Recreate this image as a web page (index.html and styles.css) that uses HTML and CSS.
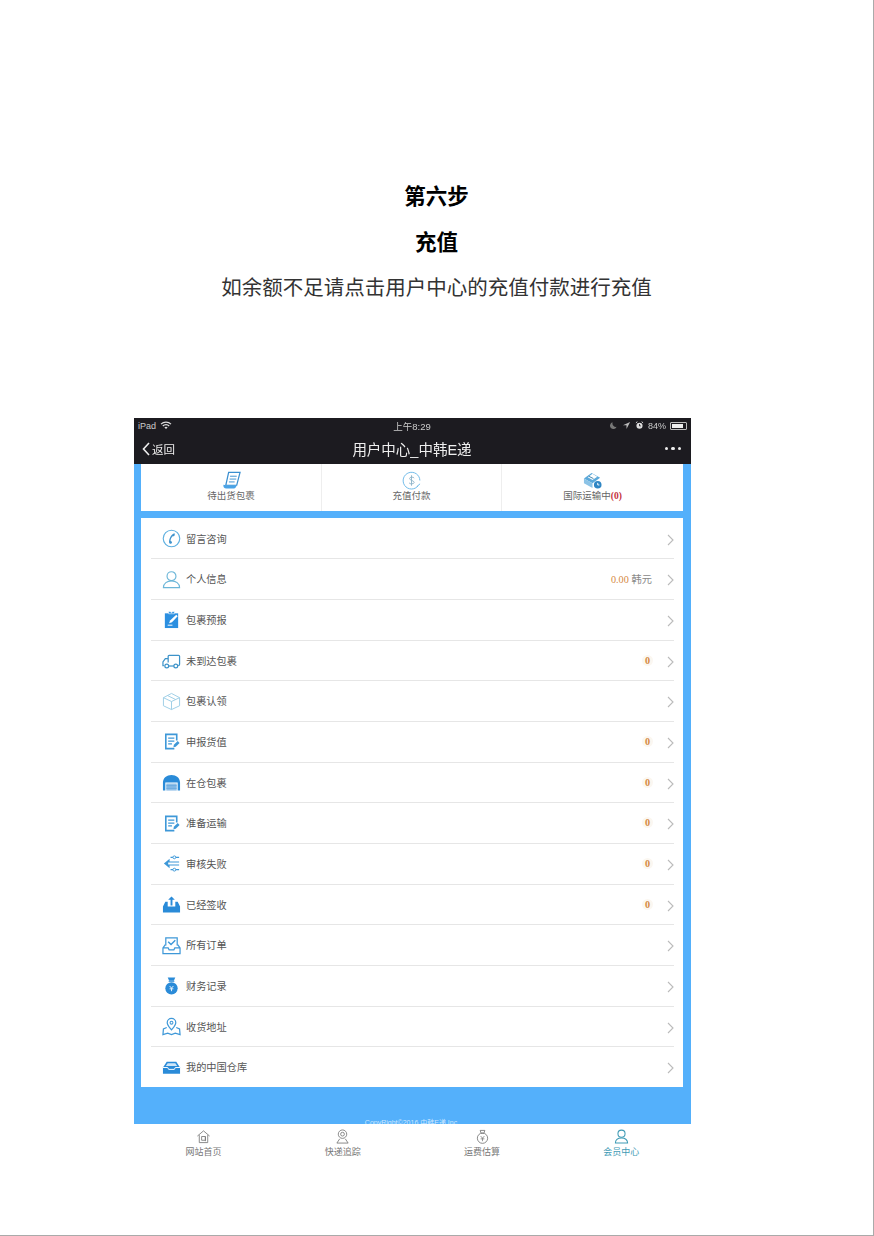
FILE: index.html
```html
<!DOCTYPE html>
<html lang="zh-CN">

<head>
    <meta charset="UTF-8">
    <title>第六步 充值</title>
    <link rel="stylesheet" href="styles.css">
</head>

<body>
    <div class="page">
        <h2 class="step">第六步</h2>
        <h2 class="step">充值</h2>
        <p class="desc">如余额不足请点击用户中心的充值付款进行充值</p>

        <div class="phone">
            <!-- barra de estado -->
            <div class="statusbar">
                <div class="status-left">
                    <span>iPad</span>
                    <svg class="st-wifi" viewBox="0 0 12 9"><path d="M1 3.2a7 7 0 0 1 10 0M2.8 5a4.4 4.4 0 0 1 6.4 0" fill="none" stroke="#ddd" stroke-width="1.2"/><path d="M4.4 6.4a2.3 2.3 0 0 1 3.2 0L6 8z" fill="#ddd"/></svg>
                </div>
                <span class="status-time">上午8:29</span>
                <div class="status-right">
                    <svg class="st-icon" viewBox="0 0 10 10"><path d="M4 1.500a3.800 3.800 0 1 0 4.500 5A4 4 0 0 1 4 1.500z" fill="#777"/></svg>
                    <svg class="st-icon" viewBox="0 0 10 10"><path d="M9 1 1 4.600h4V9z" fill="#bbb"/></svg>
                    <svg class="st-icon" viewBox="0 0 10 10"><circle cx="5" cy="5.300" r="3.400" fill="#ddd"/><path d="M5 3.400v2h1.400" stroke="#1c1b20" fill="none"/><path d="M1 2 2.600.8M9 2 7.400.8" stroke="#ddd" stroke-width="1.100"/></svg>
                    <span>84%</span>
                    <span class="battery"><span class="battery-fill"></span></span>
                </div>
            </div>

            <!-- barra de navegacion -->
            <div class="navbar">
                <div class="nav-back">
                    <svg class="back-arrow" viewBox="0 0 8 14"><path d="M7 1 1.500 7 7 13" fill="none" stroke="#eee" stroke-width="1.600"/></svg>
                    <span>返回</span>
                </div>
                <span class="nav-title">用户中心_中韩E递</span>
                <div class="nav-dots"><i></i><i></i><i></i></div>
            </div>

            <div class="content">
                <div class="shortcuts">
                    <div class="shortcut">
                        <svg class="sc-icon" viewBox="0 0 20 20"><path d="M7 1.500h12l-3.500 13.500H4z" fill="#fff" stroke="#3a8fd0" stroke-width="1.300"/><path d="M8.500 5.500h7M8 8.500h7M7.300 11.500h6" stroke="#3a8fd0"/><path d="M1.500 14.500c-.5 2.500 1 4 3 4h8c1.500 0 2.500-1.500 3-3.500h-11z" fill="#4aa3e6"/></svg>
                        <span>待出货包裹</span>
                    </div>
                    <div class="shortcut">
                        <svg class="sc-icon" viewBox="0 0 20 20"><path d="M17 15.500A8.800 8.800 0 1 1 18.800 10" fill="none" stroke="#6cb8e8"/><path d="M15.500 16.500 19 13.500" stroke="#6cb8e8"/><path d="M12.800 7.500C12.200 6 8 6 8 8s4.800 2 4.800 4-4.800 2-5.300.5M10 4.500v11" fill="none" stroke="#8fb4c9"/></svg>
                        <span>充值付款</span>
                    </div>
                    <div class="shortcut">
                        <svg class="sc-icon" viewBox="0 0 20 20"><path d="m1 8 8-6 9 5-8 6z" fill="#5ba9da"/><path d="m1 8 9 5v5L1 13z" fill="#8cc3e6"/><path d="m5 6.500 5-3.500 5 3-5 3.500z" fill="#fff"/><path d="M6 5.500 11 8" stroke="#3d7ea8"/><circle cx="15.500" cy="14.500" r="4" fill="#2f86c4"/><path d="M15.500 12.500v2.200h1.800" stroke="#fff" fill="none"/></svg>
                        <span>国际运输中<b class="count">(0)</b></span>
                    </div>
                </div>

                <div class="menu">
                    <div class="row">
                        <svg class="row-icon" viewBox="0 0 20 20"><circle cx="10" cy="10" r="8.700" fill="none" stroke="#5fb0e0" stroke-width="1.200"/><path d="M13 4.500c-3 .5-6 6-5.500 10 .3 1.500 2.500 1.200 3 0 .2-1-.5-2-1.500-2 0-2 1-4 2.200-5 1 .3 2-.3 2.200-1.300.1-1-.2-1.700-.4-1.700z" fill="#3f93cc"/></svg>
                        <span class="row-text">留言咨询</span>
                        <svg class="chev" viewBox="0 0 7 12"><path d="m1 1 5 5-5 5" fill="none" stroke="#bbb" stroke-width="1.100"/></svg>
                    </div>
                    <div class="row">
                        <svg class="row-icon" viewBox="0 0 20 20"><circle cx="10" cy="6.500" r="4.700" fill="none" stroke="#6cb6d8" stroke-width="1.200"/><path d="M1.500 18.500c0-4.500 4-7 8.500-7s8.500 2.500 8.500 7z" fill="none" stroke="#6cb6d8" stroke-width="1.200"/></svg>
                        <span class="row-text">个人信息</span>
                        <span class="row-value"><em class="num">0.00</em> 韩元</span>
                        <svg class="chev" viewBox="0 0 7 12"><path d="m1 1 5 5-5 5" fill="none" stroke="#bbb" stroke-width="1.100"/></svg>
                    </div>
                    <div class="row">
                        <svg class="row-icon" viewBox="0 0 20 20"><path d="M3 3.500h14V19H3z" fill="#2b8fe0"/><path d="M7 4V1.500h1.500L10 3l1.500-1.500H13V4z" fill="#2b8fe0" stroke="#fff" stroke-width=".6"/><path d="m7.500 14 1-3L15 5l1.500 1.500L10.500 13z" fill="#fff"/><path d="M6 16h5" stroke="#fff"/></svg>
                        <span class="row-text">包裹预报</span>
                        <svg class="chev" viewBox="0 0 7 12"><path d="m1 1 5 5-5 5" fill="none" stroke="#bbb" stroke-width="1.100"/></svg>
                    </div>
                    <div class="row">
                        <svg class="row-icon" viewBox="0 0 20 20"><path d="M6.500 12V5.500c0-.6.400-1 1-1h10c.6 0 1 .4 1 1v8.500c0 .8-.6 1.500-1.500 1.500M6 8H3.500L1 11.500v4h1" fill="none" stroke="#3d93c9" stroke-width="1.300"/><circle cx="5" cy="15.800" r="2" fill="none" stroke="#3d93c9" stroke-width="1.300"/><circle cx="14.500" cy="15.800" r="2" fill="none" stroke="#3d93c9" stroke-width="1.300"/><path d="M7 15.800h5.500" stroke="#3d93c9" stroke-width="1.300"/></svg>
                        <span class="row-text">未到达包裹</span>
                        <span class="row-value"><em class="num badge">0</em></span>
                        <svg class="chev" viewBox="0 0 7 12"><path d="m1 1 5 5-5 5" fill="none" stroke="#bbb" stroke-width="1.100"/></svg>
                    </div>
                    <div class="row">
                        <svg class="row-icon" viewBox="0 0 20 20"><path d="M10 1.500 18.500 6v8.500L10 18.500 1.500 14.500V6zM1.500 6 10 10l8.500-4M10 10v8.500M6 3.800l8.500 4.200" fill="none" stroke="#9ccde6" stroke-width="1"/></svg>
                        <span class="row-text">包裹认领</span>
                        <svg class="chev" viewBox="0 0 7 12"><path d="m1 1 5 5-5 5" fill="none" stroke="#bbb" stroke-width="1.100"/></svg>
                    </div>
                    <div class="row">
                        <svg class="row-icon" viewBox="0 0 20 20"><path d="M15.500 9V2.500H4v15h9" fill="none" stroke="#3e98d8" stroke-width="1.700"/><path d="M6.500 6.500h6.500M6.500 9.500h6.500M6.500 12.500h4" stroke="#3e98d8" stroke-width="1.300"/><path d="m12 16 .5-2.500 4-4 2 2-4 4z" fill="#3e98d8"/></svg>
                        <span class="row-text">申报货值</span>
                        <span class="row-value"><em class="num badge">0</em></span>
                        <svg class="chev" viewBox="0 0 7 12"><path d="m1 1 5 5-5 5" fill="none" stroke="#bbb" stroke-width="1.100"/></svg>
                    </div>
                    <div class="row">
                        <svg class="row-icon" viewBox="0 0 20 20"><path d="M1 18.500V10C1 5 5 2 10 2s9 3 9 8v8.500h-2.500V10h-13v8.500z" fill="#2a8bd8"/><path d="M4.500 11h11v7.500h-11z" fill="#8fbfe8"/><path d="M4.500 13.500h11M4.500 16h11" stroke="#5fa3dc"/></svg>
                        <span class="row-text">在仓包裹</span>
                        <span class="row-value"><em class="num badge">0</em></span>
                        <svg class="chev" viewBox="0 0 7 12"><path d="m1 1 5 5-5 5" fill="none" stroke="#bbb" stroke-width="1.100"/></svg>
                    </div>
                    <div class="row">
                        <svg class="row-icon" viewBox="0 0 20 20"><path d="M15.500 9V2.500H4v15h9" fill="none" stroke="#3e98d8" stroke-width="1.700"/><path d="M6.500 6.500h6.500M6.500 9.500h6.500M6.500 12.500h4" stroke="#3e98d8" stroke-width="1.300"/><path d="m12 16 .5-2.500 4-4 2 2-4 4z" fill="#3e98d8"/></svg>
                        <span class="row-text">准备运输</span>
                        <span class="row-value"><em class="num badge">0</em></span>
                        <svg class="chev" viewBox="0 0 7 12"><path d="m1 1 5 5-5 5" fill="none" stroke="#bbb" stroke-width="1.100"/></svg>
                    </div>
                    <div class="row">
                        <svg class="row-icon" viewBox="0 0 20 20"><path d="m8 5-6 5 6 5v-3h10v-1H6.500v-2H18V8H8z" fill="#3e98d8"/><path d="M9 3.500h9M9 16.500h9" stroke="#3e98d8" stroke-width="1.200"/><circle cx="13" cy="3.500" r="1.500" fill="#fff" stroke="#3e98d8"/><circle cx="13" cy="16.500" r="1.500" fill="#fff" stroke="#3e98d8"/></svg>
                        <span class="row-text">审核失败</span>
                        <span class="row-value"><em class="num badge">0</em></span>
                        <svg class="chev" viewBox="0 0 7 12"><path d="m1 1 5 5-5 5" fill="none" stroke="#bbb" stroke-width="1.100"/></svg>
                    </div>
                    <div class="row">
                        <svg class="row-icon" viewBox="0 0 20 20"><path d="M3.500 7H6v5h8V7h2.500L19 12v6.500H1V12z" fill="#2a8bd8"/><path d="M10 1.500 6.500 5H9v6h2V5h2.500z" fill="#2a8bd8"/></svg>
                        <span class="row-text">已经签收</span>
                        <span class="row-value"><em class="num badge">0</em></span>
                        <svg class="chev" viewBox="0 0 7 12"><path d="m1 1 5 5-5 5" fill="none" stroke="#bbb" stroke-width="1.100"/></svg>
                    </div>
                    <div class="row">
                        <svg class="row-icon" viewBox="0 0 20 20"><path d="M4 10V2h12v8" fill="none" stroke="#3e98d8" stroke-width="1.300"/><path d="m6.500 6 3 3 4.500-4.500" fill="none" stroke="#3e98d8" stroke-width="1.500"/><path d="M3.500 9 1 12.500V18.500h18v-6L16.500 9M1 12.500h5.500l1 2h5l1-2H19" fill="none" stroke="#3e98d8" stroke-width="1.300"/></svg>
                        <span class="row-text">所有订单</span>
                        <svg class="chev" viewBox="0 0 7 12"><path d="m1 1 5 5-5 5" fill="none" stroke="#bbb" stroke-width="1.100"/></svg>
                    </div>
                    <div class="row">
                        <svg class="row-icon" viewBox="0 0 20 20"><path d="M6 1.500h8L12.500 5h-5z" fill="#2a8bd8"/><path d="M7 5.600h6" stroke="#2a8bd8"/><circle cx="10" cy="13" r="6.500" fill="#2a8bd8"/><path d="M8 10.500l2 2.300 2-2.300M8 13.500h4M10 13v3" stroke="#fff" fill="none" stroke-width=".9"/></svg>
                        <span class="row-text">财务记录</span>
                        <svg class="chev" viewBox="0 0 7 12"><path d="m1 1 5 5-5 5" fill="none" stroke="#bbb" stroke-width="1.100"/></svg>
                    </div>
                    <div class="row">
                        <svg class="row-icon" viewBox="0 0 20 20"><path d="M10 13.500C7.500 10.500 5.500 8.500 5.500 6a4.500 4.500 0 0 1 9 0c0 2.500-2 4.500-4.500 7.500z" fill="none" stroke="#3e98d8" stroke-width="1.300"/><circle cx="10" cy="6" r="1.500" fill="none" stroke="#3e98d8" stroke-width="1.100"/><path d="M5 11 1.500 12.500 1 18.500l5-1.500 4 1.500 4-1.500 5 1.500-.5-6L15 11" fill="none" stroke="#3e98d8" stroke-width="1.300"/></svg>
                        <span class="row-text">收货地址</span>
                        <svg class="chev" viewBox="0 0 7 12"><path d="m1 1 5 5-5 5" fill="none" stroke="#bbb" stroke-width="1.100"/></svg>
                    </div>
                    <div class="row">
                        <svg class="row-icon" viewBox="0 0 20 20"><path d="M5 4h10l4 6v6.500H1V10z" fill="#2a8bd8"/><path d="M6 5.500h8l2 3H4z" fill="#cfe6f8"/><path d="M1 10h5l1 2h6l1-2h5" fill="none" stroke="#fff"/></svg>
                        <span class="row-text">我的中国仓库</span>
                        <svg class="chev" viewBox="0 0 7 12"><path d="m1 1 5 5-5 5" fill="none" stroke="#bbb" stroke-width="1.100"/></svg>
                    </div>
                </div>

                <div class="copyright">CopyRight©2016 中韩E递 Inc.</div>
            </div>

            <!-- barra inferior -->
            <div class="tabbar">
                <div class="tab">
                    <svg class="tab-icon" viewBox="0 0 16 16"><path d="M1.500 7.500 8 2l6.500 5.500M3.500 6.500V14.500h9V6.500" fill="none" stroke="#777" stroke-width=".9"/><path d="M6 8h4v4H6zM10 8v5" fill="none" stroke="#777" stroke-width=".9"/></svg>
                    <span>网站首页</span>
                </div>
                <div class="tab">
                    <svg class="tab-icon" viewBox="0 0 16 16"><circle cx="8" cy="5.500" r="4.500" fill="none" stroke="#777" stroke-width=".9"/><circle cx="8" cy="5.500" r="2" fill="none" stroke="#777" stroke-width=".9"/><path d="M5 10.500 2 15h12l-3-4.500" fill="none" stroke="#777" stroke-width=".9"/></svg>
                    <span>快递追踪</span>
                </div>
                <div class="tab">
                    <svg class="tab-icon" viewBox="0 0 16 16"><path d="M5.500 1.500h5l-1 3h-3z" fill="none" stroke="#777" stroke-width=".9"/><circle cx="8" cy="9.800" r="5.500" fill="none" stroke="#777" stroke-width=".9"/><path d="m6 7.500 2 2.300 2-2.300M6 10.500h4M8 9.800V13" fill="none" stroke="#777" stroke-width=".8"/></svg>
                    <span>运费估算</span>
                </div>
                <div class="tab tab-active">
                    <svg class="tab-icon" viewBox="0 0 16 16"><circle cx="8" cy="5" r="3.800" fill="none" stroke="#3f9bb5" stroke-width="1.100"/><path d="M1.500 15c0-3.500 2.800-5.500 6.500-5.500s6.500 2 6.500 5.500z" fill="none" stroke="#3f9bb5" stroke-width="1.100"/></svg>
                    <span>会员中心</span>
                </div>
            </div>
        </div>
    </div>
</body>

</html>
```

FILE: styles.css
```css
* {
    box-sizing: border-box;
}

body {
    margin: 0;
    background-color: #fff;
    font-family: "Liberation Sans", "Noto Sans CJK SC", sans-serif;
}

.page {
    height: 1236px;
    padding-top: 182px;
    border-right: 1px solid #aaa;
    border-bottom: 1px solid #aaa;
    overflow: hidden;
}

/* Titulos */
.step {
    margin: 0 0 17px;
    font-size: 21.5px;
    line-height: 30px;
    font-weight: bold;
    text-align: center;
    color: #000;
}

.step + .step {
    margin-top: -1px;
}

.desc {
    margin: -2px 0 0;
    font-size: 20.5px;
    line-height: 30px;
    text-align: center;
    color: #333;
}

/* Captura del telefono */
.phone {
    width: 557px;
    margin: 115px 0 0 134px;
    filter: blur(0.45px);
}

.statusbar {
    display: flex;
    align-items: center;
    justify-content: space-between;
    height: 15px;
    padding: 0 4px;
    background-color: #1c1b20;
    color: #ccc;
    font-size: 9px;
    position: relative;
}

.status-left,
.status-right {
    display: flex;
    align-items: center;
    gap: 4px;
}

.st-wifi {
    width: 12px;
    height: 9px;
}

.st-icon {
    width: 9px;
    height: 9px;
}

.status-time {
    position: absolute;
    left: 0;
    right: 0;
    text-align: center;
    margin-left: -1px;
    font-size: 9.5px;
}

.battery {
    display: block;
    width: 17px;
    height: 8px;
    padding: 1px;
    border: 1px solid #bbb;
    border-radius: 1px;
}

.battery-fill {
    display: block;
    width: 84%;
    height: 100%;
    background-color: #eee;
}

.navbar {
    display: flex;
    align-items: center;
    justify-content: space-between;
    height: 31px;
    padding: 0 10px 0 8px;
    background-color: #1c1b20;
    color: #eee;
    position: relative;
}

.nav-back {
    display: flex;
    align-items: center;
    gap: 2px;
    font-size: 11.5px;
}

.back-arrow {
    width: 8px;
    height: 14px;
}

.nav-title {
    position: absolute;
    left: 0;
    right: 0;
    margin-left: -1px;
    text-align: center;
    font-size: 14.5px;
}

.nav-dots {
    display: flex;
    gap: 3px;
}

.nav-dots i {
    display: block;
    width: 3.5px;
    height: 3.5px;
    border-radius: 50%;
    background-color: #eee;
}

.content {
    padding: 0 8px 0 7px;
    background-color: #54b0fb;
}

.shortcuts {
    display: grid;
    grid-template-columns: 180px 180px 1fr;
    height: 47px;
    background-color: #fff;
}

.shortcut {
    display: flex;
    flex-direction: column;
    align-items: center;
    padding-top: 7px;
    font-size: 9.5px;
    line-height: 12px;
    color: #666;
    border-left: 1px solid #eee;
}

.shortcut:first-child {
    border-left: 0;
}

.sc-icon {
    width: 19px;
    height: 19px;
}

.count {
    font-family: "Liberation Serif", serif;
    color: #c4303c;
}

.menu {
    display: flex;
    flex-direction: column;
    height: 569px;
    margin-top: 7px;
    padding: 0.7px 9px 0 10px;
    background-color: #fff;
}

.row {
    flex: 1;
    display: flex;
    align-items: center;
    border-bottom: 1px solid #e6e6e6;
    font-size: 10.2px;
    color: #555;
}

.row:last-child {
    border-bottom: 0;
}

.row-icon {
    width: 19px;
    height: 19px;
    margin: 0 5px 0 11px;
    flex-shrink: 0;
}

.row-text {
    flex: 1;
    margin-top: -1px;
}

.row-value {
    margin-right: 15px;
    margin-top: -1px;
    color: #888;
}

.num {
    font-family: "Liberation Serif", serif;
    font-style: normal;
    color: #d5893f;
}

.badge {
    display: inline-block;
    margin-right: -1px;
    padding: 0 3px;
    border-radius: 6px;
    background-color: #fbf7f1;
    font-weight: bold;
}

.chev {
    width: 7px;
    height: 12px;
    margin-top: 2px;
}

.copyright {
    height: 37px;
    padding-top: 31px;
    overflow: hidden;
    text-align: center;
    font-size: 7px;
    line-height: 10px;
    color: #cfe8ff;
}

.tabbar {
    display: grid;
    grid-template-columns: repeat(4, 1fr);
    height: 41px;
    background-color: #fff;
}

.tab {
    display: flex;
    flex-direction: column;
    align-items: center;
    padding-top: 5px;
    gap: 2px;
    font-size: 9px;
    line-height: 13px;
    color: #777;
}

.tab-icon {
    width: 15px;
    height: 15px;
}

.tab-active {
    color: #3f9bb5;
}
```
